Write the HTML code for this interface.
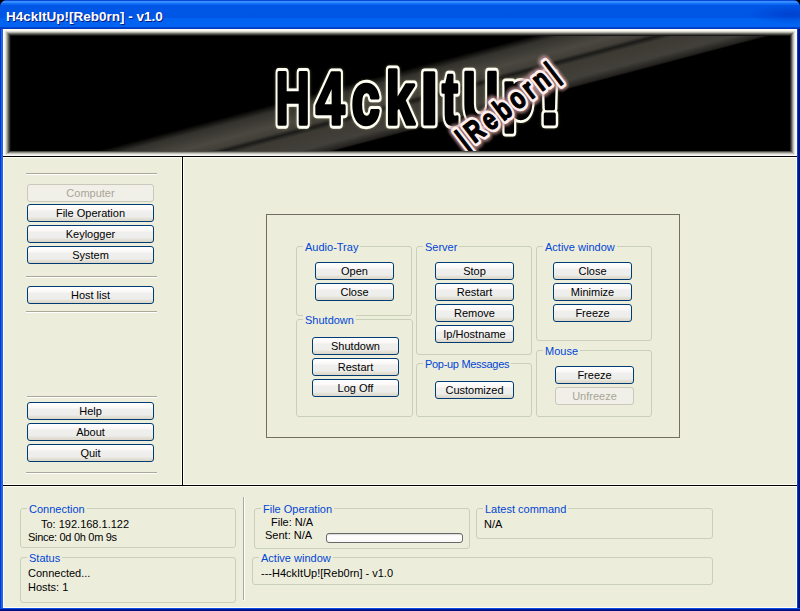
<!DOCTYPE html>
<html><head><meta charset="utf-8">
<style>
*{box-sizing:border-box;margin:0;padding:0}
html,body{width:800px;height:611px;overflow:hidden;background:#000}
body{position:relative;font-family:"Liberation Sans",sans-serif;font-size:11px;color:#000}
.a{position:absolute}
#win{left:0;top:0;width:800px;height:611px;background:#0842D0;border-radius:7px 7px 0 0;overflow:hidden}
#title{left:0;top:0;width:800px;height:29px;
 background:linear-gradient(to bottom,#0A48D8 0px,#0A48D8 1px,#3A90FF 1px,#3088FF 3px,#1470F8 3px,#0C66F0 5px,#0057E6 5px,#0055E5 18px,#0062F0 18px,#0063F2 27px,#0044D4 27px,#0038C0 29px)}
#title .t{left:6px;top:9px;font-size:13.5px;font-weight:bold;color:#fff;text-shadow:1px 1px 0 #0A1883;white-space:pre;line-height:15px}
#lb{left:0;top:29px;width:3px;height:582px;background:linear-gradient(to right,#0831C8 0,#0831C8 1px,#166AEE 1px,#1666EA 3px)}
#rb{left:797px;top:29px;width:3px;height:580px;background:linear-gradient(to right,#0A3ED8 0,#0A3ED8 1px,#00168E 1px,#000E84 3px)}
#bb{left:0;top:608px;width:800px;height:3px;background:linear-gradient(to bottom,#0A4EE8 0,#0A4EE8 1px,#00168E 1px,#000E84 3px)}
#client{left:3px;top:29px;width:794px;height:579px;background:#EDEDDC}
.hl{background:#FFFFF4}
.blk{background:#000}
.btn{position:absolute;height:18px;border:1px solid #003C74;border-radius:3px;
 background:linear-gradient(to bottom,#FFFFFF 0px,#FCF7F7 5px,#EFEFEE 6px,#EDEDEB 12px,#E6E4DB 13px,#DBD6C8 16px);
 text-align:center;line-height:15px;padding-top:1px;white-space:pre}
.btn.dis{border-color:#CAC8BB;background:#F0EFE8;color:#A8A596}
.grp{position:absolute;border:1px solid #C8D0B8;border-radius:3px}
.lbl{position:absolute;color:#0046D5;background:#EDEDDC;padding:0 2px 0 2px;line-height:13px;white-space:pre}
.txt{position:absolute;line-height:13px;white-space:pre}
.sep{position:absolute;height:2px;border-top:1px solid #ACA899;border-bottom:1px solid #FFFFFF}
</style></head>
<body>
<div id="win" class="a">
 <div id="title" class="a"><div class="a" style="left:700px;top:3px;width:100px;height:24px;background:radial-gradient(ellipse 40px 10px at 90px 11px,rgba(0,50,190,0.55),rgba(0,50,190,0) 100%)"></div><div class="t a">H4ckItUp![Reb0rn] - v1.0</div></div>
 <div id="lb" class="a"></div>
 <div id="rb" class="a"></div>
 <div id="bb" class="a"></div>
 <div id="client" class="a"></div>
 <!-- banner -->
 <svg class="a" style="left:3px;top:29px" width="794" height="127" viewBox="0 0 794 127">
<defs>
 <linearGradient id="band" gradientUnits="userSpaceOnUse" x1="97" y1="121" x2="112.6" y2="180"><stop offset="0" stop-color="#000"/><stop offset="0.12" stop-color="#33322d"/><stop offset="0.35" stop-color="#4a4840"/><stop offset="0.47" stop-color="#423f38"/><stop offset="0.53" stop-color="#1a1a18"/><stop offset="0.6" stop-color="#3c3a33"/><stop offset="0.85" stop-color="#42403a"/><stop offset="0.97" stop-color="#22211e"/><stop offset="1" stop-color="#000"/></linearGradient>
 <linearGradient id="bvL" x1="0" y1="0" x2="1" y2="0"><stop offset="0" stop-color="#FFFDE8"/><stop offset="0.15" stop-color="#FFF8F8"/><stop offset="0.3" stop-color="#E8E6E0"/><stop offset="0.45" stop-color="#B8B8B0"/><stop offset="0.6" stop-color="#808078"/><stop offset="0.75" stop-color="#484844"/><stop offset="0.9" stop-color="#181818"/><stop offset="1" stop-color="#000"/></linearGradient>
 <linearGradient id="bvT" x1="0" y1="0" x2="0" y2="1"><stop offset="0" stop-color="#FFFDE8"/><stop offset="0.18" stop-color="#FFFFF8"/><stop offset="0.35" stop-color="#E0E0D8"/><stop offset="0.5" stop-color="#B0B0A8"/><stop offset="0.65" stop-color="#707068"/><stop offset="0.8" stop-color="#404040"/><stop offset="1" stop-color="#000"/></linearGradient>
 <linearGradient id="bvR" x1="1" y1="0" x2="0" y2="0"><stop offset="0" stop-color="#FFFDF0"/><stop offset="0.18" stop-color="#FFF8F8"/><stop offset="0.35" stop-color="#E8E8E0"/><stop offset="0.5" stop-color="#C0C0B8"/><stop offset="0.65" stop-color="#909088"/><stop offset="0.8" stop-color="#505050"/><stop offset="1" stop-color="#101010"/></linearGradient>
 <linearGradient id="bvB" x1="0" y1="1" x2="0" y2="0"><stop offset="0" stop-color="#FFFFFF"/><stop offset="0.25" stop-color="#F0F0E8"/><stop offset="0.45" stop-color="#D0D0C8"/><stop offset="0.65" stop-color="#A0A098"/><stop offset="0.85" stop-color="#606058"/><stop offset="1" stop-color="#303030"/></linearGradient>
 <filter id="gl" x="-20%" y="-20%" width="140%" height="140%"><feGaussianBlur stdDeviation="1.4"/></filter>
</defs>
<rect width="794" height="127" fill="#000"/>
<rect width="794" height="127" fill="url(#band)"/>
<g font-family="Liberation Sans" font-weight="bold" font-size="74" stroke-linejoin="round">
 <g fill="none" stroke="#d8d490" stroke-width="7" opacity="0.6" filter="url(#gl)"><text vector-effect="non-scaling-stroke" transform="translate(272.52,94.5) scale(0.644,1)">H</text><text vector-effect="non-scaling-stroke" transform="translate(312.85,94.5) scale(0.704,1)">4</text><text vector-effect="non-scaling-stroke" transform="translate(348.58,94.5) scale(0.693,1)">c</text><text vector-effect="non-scaling-stroke" transform="translate(382.55,94.5) scale(0.711,1)">k</text><text vector-effect="non-scaling-stroke" transform="translate(417.54,94.5) scale(0.856,1)">I</text><text vector-effect="non-scaling-stroke" transform="translate(438.90,94.5) scale(0.649,1)">t</text><text vector-effect="non-scaling-stroke" transform="translate(459.38,94.5) scale(0.676,1)">U</text><text vector-effect="non-scaling-stroke" transform="translate(499.33,89) scale(0.686,0.9)">p</text><text vector-effect="non-scaling-stroke" transform="translate(535.95,94.5) scale(0.885,1)">!</text></g>
 <g fill="none" stroke="#FFFFF4" stroke-width="8.0"><text vector-effect="non-scaling-stroke" transform="translate(272.52,94.5) scale(0.644,1)">H</text><text vector-effect="non-scaling-stroke" transform="translate(312.85,94.5) scale(0.704,1)">4</text><text vector-effect="non-scaling-stroke" transform="translate(348.58,94.5) scale(0.693,1)">c</text><text vector-effect="non-scaling-stroke" transform="translate(382.55,94.5) scale(0.711,1)">k</text><text vector-effect="non-scaling-stroke" transform="translate(417.54,94.5) scale(0.856,1)">I</text><text vector-effect="non-scaling-stroke" transform="translate(438.90,94.5) scale(0.649,1)">t</text><text vector-effect="non-scaling-stroke" transform="translate(459.38,94.5) scale(0.676,1)">U</text><text vector-effect="non-scaling-stroke" transform="translate(499.33,89) scale(0.686,0.9)">p</text><text vector-effect="non-scaling-stroke" transform="translate(535.95,94.5) scale(0.885,1)">!</text></g>
 <g fill="#000" stroke="#000" stroke-width="3"><text vector-effect="non-scaling-stroke" transform="translate(272.52,94.5) scale(0.644,1)">H</text><text vector-effect="non-scaling-stroke" transform="translate(312.85,94.5) scale(0.704,1)">4</text><text vector-effect="non-scaling-stroke" transform="translate(348.58,94.5) scale(0.693,1)">c</text><text vector-effect="non-scaling-stroke" transform="translate(382.55,94.5) scale(0.711,1)">k</text><text vector-effect="non-scaling-stroke" transform="translate(417.54,94.5) scale(0.856,1)">I</text><text vector-effect="non-scaling-stroke" transform="translate(438.90,94.5) scale(0.649,1)">t</text><text vector-effect="non-scaling-stroke" transform="translate(459.38,94.5) scale(0.676,1)">U</text><text vector-effect="non-scaling-stroke" transform="translate(499.33,89) scale(0.686,0.9)">p</text><text vector-effect="non-scaling-stroke" transform="translate(535.95,94.5) scale(0.885,1)">!</text></g>
</g>
<g transform="translate(463,121) rotate(-37.5)" font-family="Liberation Sans" font-weight="bold" font-size="30" letter-spacing="5.3" stroke-linejoin="round">
 <text fill="none" stroke="#c89898" stroke-width="11" opacity="0.75" filter="url(#gl)" transform="scale(0.75,1)" vector-effect="non-scaling-stroke">|Reborn|</text>
 <text fill="none" stroke="#FFEEEE" stroke-width="6.4" transform="scale(0.75,1)" vector-effect="non-scaling-stroke">|Reborn|</text>
 <text fill="#000" stroke="#000" stroke-width="1.2" transform="scale(0.75,1)" vector-effect="non-scaling-stroke">|Reborn|</text>
</g>
<polygon shape-rendering="crispEdges" points="0,0 8,7 8,122 0,127" fill="url(#bvL)"/>
<polygon shape-rendering="crispEdges" points="0,0 794,0 787,7 8,7" fill="url(#bvT)"/>
<polygon shape-rendering="crispEdges" points="794,0 794,127 787,122 787,7" fill="url(#bvR)"/>
<polygon shape-rendering="crispEdges" points="0,127 794,127 787,122 8,122" fill="url(#bvB)"/>
</svg>
 <!-- frame lines -->
 <div class="a hl" style="left:3px;top:157px;width:179px;height:1px"></div>
 <div class="a hl" style="left:183px;top:157px;width:614px;height:1px"></div>
 <div class="a hl" style="left:181px;top:157px;width:1px;height:328px"></div>
 <div class="a hl" style="left:183px;top:157px;width:1px;height:328px"></div>
 <div class="a hl" style="left:3px;top:484px;width:179px;height:1px"></div>
 <div class="a hl" style="left:183px;top:484px;width:614px;height:1px"></div>
 <div class="a hl" style="left:3px;top:486px;width:794px;height:1px"></div>
 <div class="a hl" style="left:3px;top:157px;width:1px;height:451px"></div>
 <div class="a hl" style="left:796px;top:157px;width:1px;height:451px"></div>
 <div class="a hl" style="left:3px;top:607px;width:794px;height:1px"></div>
 <div class="a blk" style="left:3px;top:156px;width:794px;height:1px"></div>
 <div class="a blk" style="left:182px;top:156px;width:1px;height:330px"></div>
 <div class="a blk" style="left:3px;top:485px;width:794px;height:1px"></div>

 <!-- left panel -->
 <div class="sep" style="left:26px;top:173px;width:131px"></div>
 <div class="btn dis" style="left:27px;top:184px;width:127px">Computer</div>
 <div class="btn" style="left:27px;top:204px;width:127px">File Operation</div>
 <div class="btn" style="left:27px;top:225px;width:127px">Keylogger</div>
 <div class="btn" style="left:27px;top:246px;width:127px">System</div>
 <div class="sep" style="left:26px;top:276px;width:131px"></div>
 <div class="btn" style="left:27px;top:286px;width:127px">Host list</div>
 <div class="sep" style="left:26px;top:311px;width:131px"></div>
 <div class="sep" style="left:27px;top:396px;width:130px"></div>
 <div class="btn" style="left:27px;top:402px;width:127px">Help</div>
 <div class="btn" style="left:27px;top:423px;width:127px">About</div>
 <div class="btn" style="left:27px;top:444px;width:127px">Quit</div>
 <div class="sep" style="left:26px;top:472px;width:131px"></div>

 <!-- main box -->
 <div class="a" style="left:266px;top:214px;width:414px;height:224px;border:1px solid #716F64"></div>

 <div class="grp" style="left:296px;top:246px;width:116px;height:70px"></div>
 <div class="lbl" style="left:303px;top:241px">Audio-Tray</div>
 <div class="btn" style="left:315px;top:262px;width:79px">Open</div>
 <div class="btn" style="left:315px;top:283px;width:79px">Close</div>

 <div class="grp" style="left:296px;top:319px;width:117px;height:98px"></div>
 <div class="lbl" style="left:303px;top:314px">Shutdown</div>
 <div class="btn" style="left:312px;top:337px;width:87px">Shutdown</div>
 <div class="btn" style="left:312px;top:358px;width:87px">Restart</div>
 <div class="btn" style="left:312px;top:379px;width:87px">Log Off</div>

 <div class="grp" style="left:416px;top:246px;width:116px;height:109px"></div>
 <div class="lbl" style="left:423px;top:241px">Server</div>
 <div class="btn" style="left:435px;top:262px;width:79px">Stop</div>
 <div class="btn" style="left:435px;top:283px;width:79px">Restart</div>
 <div class="btn" style="left:435px;top:304px;width:79px">Remove</div>
 <div class="btn" style="left:435px;top:325px;width:79px">Ip/Hostname</div>

 <div class="grp" style="left:416px;top:363px;width:116px;height:54px"></div>
 <div class="lbl" style="left:423px;top:358px;letter-spacing:-0.3px">Pop-up Messages</div>
 <div class="btn" style="left:435px;top:381px;width:79px">Customized</div>

 <div class="grp" style="left:536px;top:246px;width:116px;height:95px"></div>
 <div class="lbl" style="left:543px;top:241px">Active window</div>
 <div class="btn" style="left:553px;top:262px;width:79px">Close</div>
 <div class="btn" style="left:553px;top:283px;width:79px">Minimize</div>
 <div class="btn" style="left:553px;top:304px;width:79px">Freeze</div>

 <div class="grp" style="left:536px;top:350px;width:116px;height:67px"></div>
 <div class="lbl" style="left:543px;top:345px">Mouse</div>
 <div class="btn" style="left:555px;top:366px;width:79px">Freeze</div>
 <div class="btn dis" style="left:555px;top:387px;width:79px">Unfreeze</div>

 <!-- bottom -->
 <div class="a" style="left:243px;top:497px;width:1px;height:103px;background:#ACA899"></div>
 <div class="a" style="left:244px;top:497px;width:1px;height:104px;background:#fff"></div>

 <div class="grp" style="left:20px;top:508px;width:216px;height:40px"></div>
 <div class="lbl" style="left:27px;top:503px">Connection</div>
 <div class="txt" style="left:41px;top:518px">To: 192.168.1.122</div>
 <div class="txt" style="left:28px;top:531px;letter-spacing:-0.3px">Since: 0d 0h 0m 9s</div>

 <div class="grp" style="left:20px;top:557px;width:216px;height:46px"></div>
 <div class="lbl" style="left:27px;top:552px">Status</div>
 <div class="txt" style="left:28px;top:567px">Connected...</div>
 <div class="txt" style="left:28px;top:581px">Hosts: 1</div>

 <div class="grp" style="left:254px;top:508px;width:216px;height:41px"></div>
 <div class="lbl" style="left:261px;top:503px">File Operation</div>
 <div class="txt" style="left:271px;top:516px">File: N/A</div>
 <div class="txt" style="left:265px;top:529px">Sent: N/A</div>
 <div class="a" style="left:326px;top:533px;width:137px;height:10px;border:1px solid #686868;border-radius:3px;background:linear-gradient(#C8C8C8 0,#F4F4F4 1px,#FFFFFF 2px,#FCF8F8 100%)"></div>

 <div class="grp" style="left:476px;top:508px;width:237px;height:31px"></div>
 <div class="lbl" style="left:483px;top:503px">Latest command</div>
 <div class="txt" style="left:484px;top:518px">N/A</div>

 <div class="grp" style="left:252px;top:557px;width:461px;height:28px"></div>
 <div class="lbl" style="left:259px;top:552px">Active window</div>
 <div class="txt" style="left:261px;top:567px">---H4ckItUp![Reb0rn] - v1.0</div>
</div>
</body></html>
